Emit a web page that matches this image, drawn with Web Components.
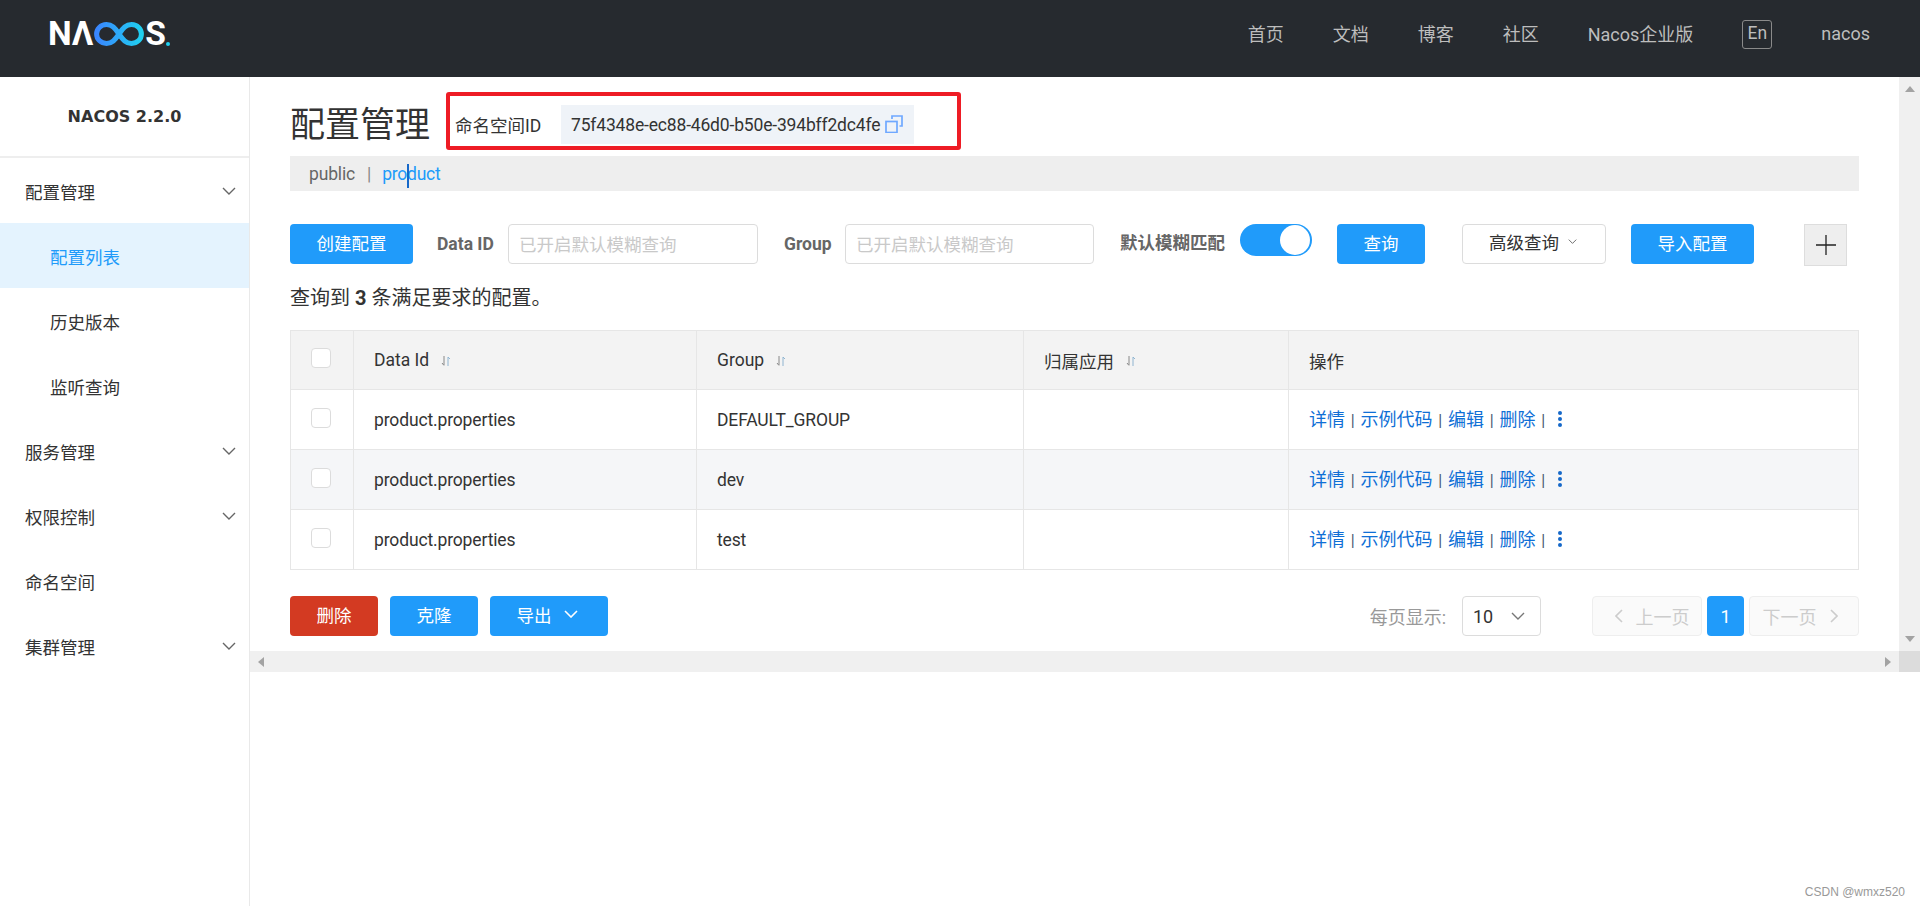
<!DOCTYPE html>
<html lang="zh">
<head>
<meta charset="utf-8">
<title>Nacos</title>
<style>
	html, body { margin: 0; height: 100%; overflow: hidden; background: #fff; }
	body { font: 17.5px Roboto, "Noto Sans CJK SC", sans-serif; color: #333; }
</style>
</head>
<body>
<nacos-app></nacos-app>

<script>
const chevron = (w, color, sw = 1.4, dir = 'down') => {
	const pts = {
		down: '1,1 7,7 13,1',
		left: '7,1 1,7 7,13',
		right: '1,1 7,7 1,13'
	}[dir]
	const box = dir === 'down' ? '0 0 14 8' : '0 0 8 14'
	const ratio = dir === 'down' ? 8 / 14 : 14 / 8
	return `<svg width="${w}" height="${Math.round(w * ratio)}" viewBox="${box}" fill="none" stroke="${color}" stroke-width="${sw}"><polyline points="${pts}"/></svg>`
}

const define = (name, css, html, setup) => {
	customElements.define(name, class extends HTMLElement {
		constructor() {
			super()
			this.attachShadow({ mode: 'open' })
		}

		connectedCallback() {
			const body = typeof html === 'function' ? html(this) : html
			this.shadowRoot.innerHTML = `<style>${css}</style>${body}`
			if (setup) setup(this)
		}
	})
}

define('app-header', `
	:host { display: flex; align-items: center; justify-content: space-between; height: 77px; padding: 0 50px; background: #262a2f; box-sizing: border-box; }
	.logo { display: flex; align-items: center; height: 24px; margin: -9px 0 0 -2px; font: 700 33.5px/24px Roboto, sans-serif; color: #fff; }
	.logo svg { display: block; margin: 0 1px 0 1px; }
	.logo .dot { width: 4px; height: 4px; margin: 20px 0 0 0; background: #1fd0f0; border-radius: 50%; }
	nav { display: flex; align-items: center; gap: 49px; margin-top: -9px; color: #bdbdbd; font-size: 18px; }
	nav span:not(.lang) { margin-bottom: 2px; }
	.lang { width: 30px; height: 29px; border: 1px solid #8a8a8a; border-radius: 3px; box-sizing: border-box; text-align: center; line-height: 25px; font-size: 17.5px; }
`, `
	<div class="logo">
		<span>N</span><span>Λ</span>
		<svg width="50" height="24" viewBox="0 0 50 24" fill="none" stroke="url(#g)" stroke-width="5">
			<defs><linearGradient id="g" x1="0" x2="1" y1="0" y2="0"><stop offset="0" stop-color="#3a86ff"/><stop offset="1" stop-color="#1fd0f0"/></linearGradient></defs>
			<path d="M25 12C21 6 18 2.6 12.5 2.6 6.5 2.6 2.6 7 2.6 12S6.5 21.4 12.5 21.4C18 21.4 21 18 25 12 29 6 32 2.6 37.5 2.6 43.5 2.6 47.4 7 47.4 12S43.5 21.4 37.5 21.4C32 21.4 29 18 25 12Z"/>
		</svg>
		<span>S</span><span class="dot"></span>
	</div>
	<nav>
		<span>首页</span><span>文档</span><span>博客</span><span>社区</span><span>Nacos企业版</span>
		<span class="lang">En</span><span>nacos</span>
	</nav>
`)

define('side-item', `
	:host { display: flex; align-items: center; justify-content: space-between; height: 65px; padding: 1px 13px 0 25px; box-sizing: border-box; color: #333; font-size: 17.5px; }
	:host([sub]) { padding-left: 50px; }
	:host([active]) { background: #e4f3fe; color: #209bfa; }
	svg { display: block; }
`, el => `<slot></slot>${el.hasAttribute('arrow') ? chevron(14, '#666') : ''}`)

define('side-menu', `
	:host { display: block; flex: none; width: 250px; border-right: 1px solid #e9e9e9; box-sizing: border-box; background: #fff; }
	.title { height: 81px; border-bottom: 2px solid #eee; box-sizing: border-box; text-align: center; font: 700 16px/80px "DejaVu Sans", Roboto, sans-serif; color: #333; }
`, `
	<div class="title">NACOS 2.2.0</div>
	<slot></slot>
`)

define('n-button', `
	:host { display: flex; align-items: center; justify-content: center; gap: 12px; flex: none; height: 40px; padding-bottom: 4px; box-sizing: border-box; border-radius: 4px; background: #209bfa; color: #fff; font-size: 17.5px; }
	:host([danger]) { background: #d33a22; }
	:host([plain]) { background: #fff; color: #333; border: 1px solid #dcdcdc; padding: 0 2px 6px 0; gap: 9px; }
	:host([arrow="white"]) { padding-right: 4px; }
	svg { display: block; }
`, el => {
	const arrow = el.getAttribute('arrow')
	if (arrow === 'small') return `<slot></slot>${chevron(9, '#666', 1.5)}`
	if (arrow === 'white') return `<slot></slot>${chevron(14, '#fff', 1.6)}`
	return `<slot></slot>`
})

define('text-box', `
	:host { display: flex; align-items: center; flex: none; height: 40px; padding: 0 0 2px 10px; box-sizing: border-box; border: 1px solid #dcdcdc; border-radius: 4px; color: #c9c9c9; font-size: 17.5px; }
`, `<slot></slot>`)

define('switch-on', `
	:host { display: block; flex: none; width: 72px; height: 32px; border-radius: 16px; background: #209bfa; position: relative; }
	i { position: absolute; top: 1px; right: 2px; width: 30px; height: 30px; border-radius: 50%; background: #fff; }
`, `<i></i>`)

define('namespace-box', `
	:host { display: flex; align-items: center; width: 515px; height: 58px; margin-left: 16px; padding: 7px 0 0 5px; border: 4px solid #ee1c25; border-radius: 3px; box-sizing: border-box; font-size: 17.5px; color: #333; }
	.id { display: flex; align-items: center; gap: 5px; width: 353px; height: 39px; margin-left: 20px; padding-left: 10px; box-sizing: border-box; background: #eff3f8; letter-spacing: -0.17px; }
	.label { width: 86px; flex: none; white-space: nowrap; }
	svg { display: block; margin-top: -1px; }
`, el => `
	<span class="label">命名空间ID</span>
	<div class="id">
		<span>${el.getAttribute('ns')}</span>
		<svg width="18" height="18" viewBox="0 0 18 18" fill="none" stroke="#6fa8ff" stroke-width="1.7">
			<rect x="1" y="6.5" width="11" height="11"/>
			<path d="M7 4V1H17V11H14.5"/>
		</svg>
	</div>
`)

define('crumb-bar', `
	:host { display: flex; align-items: center; height: 35px; padding-left: 19px; background: #eee; box-sizing: border-box; color: #666; font-size: 17.5px; letter-spacing: -0.15px; }
	.sep { margin: 0 11px 0 12px; color: #888; }
	.cur { color: #209bfa; position: relative; letter-spacing: -0.25px; }
	.cur i { position: absolute; left: 25px; top: 0; width: 1.5px; height: 24px; background: #1668c9; }
`, `<span>public</span><span class="sep">|</span><span class="cur">product<i></i></span>`)

const sortIcon = `<svg class="sort" width="10" height="10" viewBox="0 0 10 10" fill="none" stroke-width="1"><path d="M3 0V9M1 7L3 9.5" stroke="#888"/><path d="M7 10V1L9 3" stroke="#8fb4d0"/></svg>`

const COLS = 'grid-template-columns: 63px 343px 327px 265px 1fr;'
define('config-row', `
	:host { display: grid; ${COLS} height: 60px; background: #fff; color: #333; font-size: 17.5px; }
	:host([even]) { background: #f5f6f8; }
	:host([head]) { background: #f3f3f3; height: 59px; }
	.c { display: flex; align-items: center; padding-left: 20px; border-right: 1px solid #e6e6e6; border-bottom: 1px solid #e6e6e6; box-sizing: border-box; min-width: 0; }
	.c:first-child { padding: 0 2px 0 0; justify-content: center; }
	.t { letter-spacing: -0.14px; }
	.check { width: 20px; height: 20px; margin-bottom: 4px; border: 1px solid #dcdcdc; border-radius: 4px; background: #fff; box-sizing: border-box; }
	.sort { margin-left: 12px; margin-top: 2px; }
	.ops { color: #0f6fd6; font-size: 18px; }
	.ops span { margin-bottom: 4px; white-space: nowrap; }
	.ops b { font-weight: 400; color: #4a5a70; margin: 0 5.8px; font-size: 16px; }
	.dots { display: grid; gap: 2px; margin: 0 0 2px 7px; }
	.dots i { display: block; width: 4px; height: 4px; border-radius: 50%; background: #1668c9; }
`, el => {
	const check = `<div class="c"><div class="check"></div></div>`
	if (el.hasAttribute('head')) {
		return `${check}
			<div class="c">Data Id${sortIcon}</div>
			<div class="c">Group${sortIcon}</div>
			<div class="c">归属应用${sortIcon}</div>
			<div class="c">操作</div>`
	}
	return `${check}
		<div class="c t">${el.getAttribute('data-id')}</div>
		<div class="c t">${el.getAttribute('group')}</div>
		<div class="c"></div>
		<div class="c ops"><span>详情<b>|</b>示例代码<b>|</b>编辑<b>|</b>删除<b>|</b></span><div class="dots"><i></i><i></i><i></i></div></div>`
})

define('config-table', `
	:host { display: block; height: 240px; border-top: 1px solid #e6e6e6; border-left: 1px solid #e6e6e6; box-sizing: border-box; }
`, `<slot></slot>`)

define('page-size', `
	:host { display: flex; align-items: center; color: #999; font-size: 18px; }
	.sel { display: flex; align-items: center; justify-content: space-between; width: 79px; height: 40px; margin-left: 16px; padding: 0 15px 0 10px; box-sizing: border-box; border: 1px solid #dcdcdc; border-radius: 4px; color: #333; }
	svg { display: block; }
`, `<span>每页显示:</span><div class="sel"><span>10</span>${chevron(14, '#777')}</div>`)

define('page-nav', `
	:host { display: flex; align-items: center; gap: 5px; margin-left: 51px; font-size: 18px; }
	.b { display: flex; align-items: center; justify-content: center; gap: 13px; width: 110px; height: 40px; box-sizing: border-box; border: 1px solid #eee; border-radius: 4px; background: #fafafa; color: #ccc; }
	.prev { padding-left: 10px; }
	.next { padding-right: 8px; }
	.n { display: flex; align-items: center; justify-content: center; width: 37px; height: 40px; border-radius: 4px; background: #209bfa; color: #fff; }
	svg { display: block; }
`, `
	<div class="b prev">${chevron(8, '#ccc', 1.6, 'left')}<span>上一页</span></div>
	<div class="n">1</div>
	<div class="b next"><span>下一页</span>${chevron(8, '#ccc', 1.6, 'right')}</div>
`)

define('config-page', `
	:host { display: block; flex: 1; min-width: 0; padding: 15px 40px 0 40px; box-sizing: border-box; color: #333; font-size: 17.5px; }
	.head { display: flex; align-items: center; height: 58px; }
	h1 { margin: 10px 0 0; font-size: 35px; font-weight: 400; line-height: 46px; color: #333; white-space: nowrap; }
	crumb-bar { margin-top: 6px; }
	.tools { display: flex; align-items: flex-start; height: 42px; margin-top: 33px; }
	.tools label { flex: none; font-weight: 700; color: #666; line-height: 38px; white-space: nowrap; }
	.tools label.en { line-height: 40px; }
	.plus { flex: none; display: flex; align-items: center; justify-content: center; width: 43px; height: 42px; margin-left: 50px; background: #eee; border: 1px solid #ddd; box-sizing: border-box; }
	.plus svg { display: block; }
	.found { margin: 19px 0 0; height: 45px; line-height: 26px; font-size: 20px; }
	.foot { display: flex; align-items: center; margin-top: 26px; height: 40px; }
	.spacer { flex: 1; }
`, `
	<div class="head">
		<h1>配置管理</h1>
		<namespace-box ns="75f4348e-ec88-46d0-b50e-394bff2dc4fe"></namespace-box>
	</div>
	<crumb-bar></crumb-bar>
	<div class="tools">
		<n-button style="width:123px">创建配置</n-button>
		<label class="en" style="margin-left:24px;width:56px">Data ID</label>
		<text-box style="margin-left:15px;width:250px">已开启默认模糊查询</text-box>
		<label class="en" style="margin-left:26px;width:45px">Group</label>
		<text-box style="margin-left:16px;width:249px">已开启默认模糊查询</text-box>
		<label style="margin-left:26px;width:105px">默认模糊匹配</label>
		<switch-on style="margin-left:15px"></switch-on>
		<n-button style="margin-left:25px;width:88px">查询</n-button>
		<n-button plain arrow="small" style="margin-left:37px;width:144px">高级查询</n-button>
		<n-button style="margin-left:25px;width:123px">导入配置</n-button>
		<div class="plus"><svg width="20" height="20" viewBox="0 0 20 20" stroke="#222" stroke-width="1.3"><path d="M10 0V20M0 10H20"/></svg></div>
	</div>
	<p class="found">查询到 <b>3</b> 条满足要求的配置。</p>
	<config-table>
		<config-row head></config-row>
		<config-row data-id="product.properties" group="DEFAULT_GROUP"></config-row>
		<config-row even data-id="product.properties" group="dev"></config-row>
		<config-row data-id="product.properties" group="test"></config-row>
	</config-table>
	<div class="foot">
		<n-button danger style="width:88px">删除</n-button>
		<n-button style="margin-left:12px;width:88px">克隆</n-button>
		<n-button arrow="white" style="margin-left:12px;width:118px">导出</n-button>
		<div class="spacer"></div>
		<page-size></page-size>
		<page-nav></page-nav>
	</div>
`)

define('scroll-bar', `
	:host { display: flex; flex: none; align-items: center; justify-content: space-between; box-sizing: border-box; background: #f0f0f0; }
	:host([v]) { flex-direction: column; width: 21px; padding: 9px 0 9px; }
	:host([h]) { height: 21px; padding: 0 8px; }
	svg { display: block; }
`, el => el.hasAttribute('v')
	? `<svg width="10" height="6"><path d="M5 0L10 6H0Z" fill="#a3a3a3"/></svg><svg width="10" height="6"><path d="M0 0H10L5 6Z" fill="#a3a3a3"/></svg>`
	: `<svg width="6" height="10"><path d="M6 0V10L0 5Z" fill="#a3a3a3"/></svg><svg width="6" height="10"><path d="M0 0L6 5L0 10Z" fill="#a3a3a3"/></svg>`)

define('water-mark', `
	:host { position: absolute; right: 15px; bottom: 5px; font: 12px/18px "Liberation Sans", sans-serif; color: #999; }
`, `<slot></slot>`)

define('nacos-app', `
	:host { display: flex; flex-direction: column; height: 100vh; position: relative; }
	.body { display: flex; flex: 1; min-height: 0; }
	.main { display: flex; flex-direction: column; flex: 1; min-width: 0; }
	.top { display: flex; height: 574px; }
	.bottom { display: flex; }
	.bottom scroll-bar { flex: 1; }
	.corner { width: 21px; height: 21px; background: #dcdcdc; }
`, `
	<app-header></app-header>
	<div class="body">
		<side-menu>
			<side-item arrow>配置管理</side-item>
			<side-item sub active>配置列表</side-item>
			<side-item sub>历史版本</side-item>
			<side-item sub>监听查询</side-item>
			<side-item arrow>服务管理</side-item>
			<side-item arrow>权限控制</side-item>
			<side-item>命名空间</side-item>
			<side-item arrow>集群管理</side-item>
		</side-menu>
		<div class="main">
			<div class="top">
				<config-page></config-page>
				<scroll-bar v></scroll-bar>
			</div>
			<div class="bottom">
				<scroll-bar h></scroll-bar>
				<div class="corner"></div>
			</div>
		</div>
	</div>
	<water-mark>CSDN @wmxz520</water-mark>
`)
</script>
</body>
</html>
